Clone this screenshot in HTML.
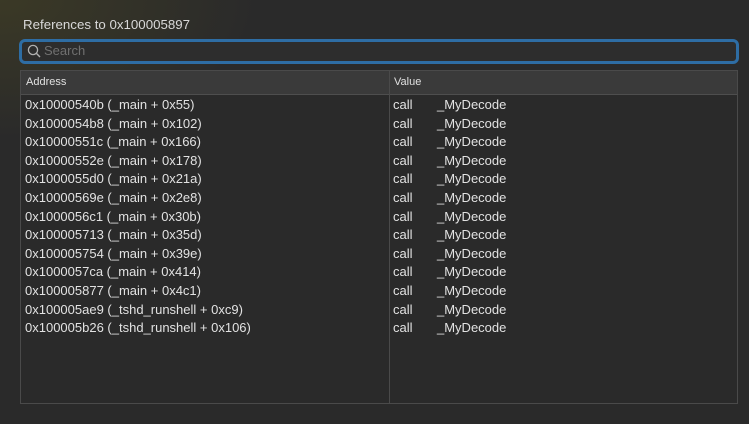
<!DOCTYPE html>
<html><head><style>
html,body{margin:0;padding:0}
body{width:749px;height:424px;overflow:hidden;background:#2a2a2a;font-family:"Liberation Sans",sans-serif;position:relative;
background-image:radial-gradient(ellipse 260px 140px at 0px 0px,rgba(90,85,30,0.35),rgba(0,0,0,0));}
.title{position:absolute;left:23px;top:17px;font-size:13.3px;color:#d8d8d8}
.search{position:absolute;left:19px;top:39px;width:714px;height:19px;border:3px solid #2e6da4;border-radius:6px;background:#2d2d2d}
.search span{position:absolute;left:22px;top:1px;font-size:13px;color:#707070}
.search svg{position:absolute;left:5px;top:2px}
.table{position:absolute;left:20px;top:70px;width:716px;height:332px;border:1px solid #4a4a4a;background:#2a2a2a}
.head{position:absolute;left:0;top:0;width:716px;height:23px;background:#3a3a3a;border-bottom:1px solid #4e4e4e}
.head div{position:absolute;top:5px;font-size:11px;color:#e0e0e0}
.vline{position:absolute;left:368px;top:0;width:1px;height:332px;background:#4a4a4a}
.row{position:absolute;left:0;height:18px;font-size:13px;color:#e2e2e2;white-space:nowrap}
.row .a{position:absolute;left:4px}
.row .b{position:absolute;left:372px}
.row .c{position:absolute;left:416px}
</style></head><body>
<div class="title">References to 0x100005897</div>
<div class="search"><svg width="14" height="14" viewBox="0 0 14 14"><circle cx="6" cy="6" r="4.6" fill="none" stroke="#b0b0b0" stroke-width="1.3"/><path d="M9.3 9.3L13 13" stroke="#b0b0b0" stroke-width="1.4"/></svg><span>Search</span></div>
<div class="table">
<div class="head"><div style="left:5px">Address</div><div style="left:373px">Value</div></div>
<div class="vline"></div>
<div class="row" style="top:26px"><span class="a">0x10000540b (_main + 0x55)</span><span class="b">call</span><span class="c">_MyDecode</span></div>
<div class="row" style="top:45px"><span class="a">0x1000054b8 (_main + 0x102)</span><span class="b">call</span><span class="c">_MyDecode</span></div>
<div class="row" style="top:63px"><span class="a">0x10000551c (_main + 0x166)</span><span class="b">call</span><span class="c">_MyDecode</span></div>
<div class="row" style="top:82px"><span class="a">0x10000552e (_main + 0x178)</span><span class="b">call</span><span class="c">_MyDecode</span></div>
<div class="row" style="top:100px"><span class="a">0x1000055d0 (_main + 0x21a)</span><span class="b">call</span><span class="c">_MyDecode</span></div>
<div class="row" style="top:119px"><span class="a">0x10000569e (_main + 0x2e8)</span><span class="b">call</span><span class="c">_MyDecode</span></div>
<div class="row" style="top:138px"><span class="a">0x1000056c1 (_main + 0x30b)</span><span class="b">call</span><span class="c">_MyDecode</span></div>
<div class="row" style="top:156px"><span class="a">0x100005713 (_main + 0x35d)</span><span class="b">call</span><span class="c">_MyDecode</span></div>
<div class="row" style="top:175px"><span class="a">0x100005754 (_main + 0x39e)</span><span class="b">call</span><span class="c">_MyDecode</span></div>
<div class="row" style="top:193px"><span class="a">0x1000057ca (_main + 0x414)</span><span class="b">call</span><span class="c">_MyDecode</span></div>
<div class="row" style="top:212px"><span class="a">0x100005877 (_main + 0x4c1)</span><span class="b">call</span><span class="c">_MyDecode</span></div>
<div class="row" style="top:231px"><span class="a">0x100005ae9 (_tshd_runshell + 0xc9)</span><span class="b">call</span><span class="c">_MyDecode</span></div>
<div class="row" style="top:249px"><span class="a">0x100005b26 (_tshd_runshell + 0x106)</span><span class="b">call</span><span class="c">_MyDecode</span></div>
</div>
</body></html>
